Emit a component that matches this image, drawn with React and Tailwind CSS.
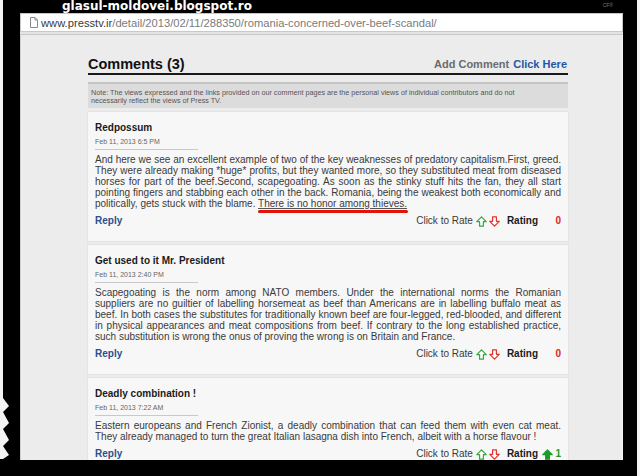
const Up = ({ filled }) => (
  <svg width="11" height="11" viewBox="0 0 11 11" className="block">
    <path
      d="M5.5 0.8 L10.2 5.7 H7.4 V10.2 H3.6 V5.7 H0.8 Z"
      fill={filled ? "#1e9a2a" : "#ffffff"}
      stroke={filled ? "#1e9a2a" : "#35a83c"}
      strokeWidth="1.2"
      strokeLinejoin="round"
    />
  </svg>
);

const Down = () => (
  <svg width="11" height="11" viewBox="0 0 11 11" className="block">
    <path
      d="M5.5 10.2 L10.2 5.3 H7.4 V0.8 H3.6 V5.3 H0.8 Z"
      fill="#ffffff"
      stroke="#e2322b"
      strokeWidth="1.2"
      strokeLinejoin="round"
    />
  </svg>
);

const Line = ({ children, last }) => (
  <div className={last ? "text-left" : "text-justify [text-align-last:justify]"}>{children}</div>
);

const Card = ({ title, date, lines, rating }) => (
  <div className="w-[480px] bg-[#f7f7f7] px-[7px] pt-[10px] pb-[14px] shadow-[0_0_0_1px_#e4e4e4]">
    <div className="text-[10px] leading-[12px] font-bold text-[#1a1a1a]">{title}</div>
    <div className="mt-[3px] text-[7px] leading-[9px] text-[#666]">{date}</div>
    <div className="mt-[3px] w-[103px] h-px bg-[#c9c9c9]" />
    <div className="mt-[4px] text-[10px] leading-[11px] text-[#3a3a3a]">
      {lines.map((l, i) => (
        <Line key={i} last={i === lines.length - 1}>
          {l}
        </Line>
      ))}
    </div>
    <div className="mt-[6px] h-[12px] flex justify-between items-center text-[10px] leading-[12px]">
      <span className="font-bold text-[#2c4f8c]">Reply</span>
      <div className="flex items-center">
        <span className="text-[#3a3a3a]">Click to Rate</span>
        <span className="ml-[3px]">
          <Up />
        </span>
        <span className="ml-[2px]">
          <Down />
        </span>
        <span className="ml-[7px] font-bold text-[#1a1a1a]">Rating</span>
        <div className="w-[23px] flex justify-end items-center">
          {rating === 0 ? (
            <span className="font-bold text-[#e2241b]">0</span>
          ) : (
            <>
              <Up filled />
              <span className="ml-[2px] font-bold text-[#1e9a2a]">{rating}</span>
            </>
          )}
        </div>
      </div>
    </div>
  </div>
);

export default function App() {
  return (
    <div className="relative w-[640px] h-[476px] overflow-hidden bg-black font-['Liberation_Sans',Arial,sans-serif]">
      <div className="flex flex-col pl-[20px] pr-[17px]">
        <div className="h-[13px] flex justify-between items-start">
          <span className="pl-[42px] text-white text-[12px] font-bold leading-[13px] whitespace-nowrap font-['DejaVu_Sans',Verdana,sans-serif]">
            glasul-moldovei.blogspot.ro
          </span>
          <span className="pr-[10px] pt-[3px] text-[5px] leading-[5px] text-[#8a7a6a]">CF®</span>
        </div>
        <div className="h-[18px] bg-white border-l border-t border-r border-[#c7c7c7] flex items-center pl-[9px]">
          <svg width="8" height="11" viewBox="0 0 8 11" className="block">
            <path d="M0.5 0.5 H5 L7.5 3 V10.5 H0.5 Z" fill="#fff" stroke="#8a8a8a" strokeWidth="1" />
            <path d="M5 0.5 V3 H7.5" fill="none" stroke="#8a8a8a" strokeWidth="1" />
          </svg>
          <span className="ml-[3px] text-[11.2px] leading-[14px] whitespace-nowrap">
            <span className="text-[#3a3a3a]">www.presstv.ir</span>
            <span className="text-[#7a7a7a]">/detail/2013/02/11/288350/romania-concerned-over-beef-scandal/</span>
          </span>
        </div>
        <div className="h-[4px] bg-[#e4e4e4] border-t border-b border-[#c9c9c9]" />
        <div className="h-[425px] bg-[#ececec] pl-[67px] overflow-hidden border-l border-[#d0d0d0] border-r border-r-[#f7f7f7]">
          <div className="mt-[20px] w-[480px] h-[20px] flex justify-between border-b-2 border-[#1a1a1a]">
            <span className="text-[14.5px] leading-[18px] font-bold text-[#111]">Comments (3)</span>
            <span className="text-[11px] leading-[18px] font-bold pr-[1px]">
              <span className="text-[#6b6b6b]">Add Comment</span>
              <span className="ml-[4px] text-[#1f57a5]">Click Here</span>
            </span>
          </div>
          <div className="mt-[7px] w-[480px] bg-[#dcdcdc] border-t-2 border-[#c4c4c4] px-[3px] pt-[5px] pb-[3px] text-[7.2px] leading-[8px] text-[#555]">
            Note: The views expressed and the links provided on our comment pages are the personal views of individual
            contributors and do not
            <br />
            necessarily reflect the views of Press TV.
          </div>
          <div className="mt-[4px] flex flex-col gap-[4px]">
            <Card
              title="Redpossum"
              date="Feb 11, 2013 6:5 PM"
              rating={0}
              lines={[
                "And here we see an excellent example of two of the key weaknesses of predatory capitalism.First, greed.",
                "They were already making *huge* profits, but they wanted more, so they substituted meat from diseased",
                "horses for part of the beef.Second, scapegoating. As soon as the stinky stuff hits the fan, they all start",
                "pointing fingers and stabbing each other in the back. Romania, being the weakest both economically and",
                <>
                  politically, gets stuck with the blame.{" "}
                  <span className="relative underline decoration-[#555] underline-offset-[1px]">
                    There is no honor among thieves.
                    <span className="absolute left-0 right-[-1px] bottom-[-4px] h-[3px] rounded-full bg-[#e3120b]" />
                  </span>
                </>,
              ]}
            />
            <Card
              title="Get used to it Mr. President"
              date="Feb 11, 2013 2:40 PM"
              rating={0}
              lines={[
                "Scapegoating is the norm among NATO members. Under the international norms the Romanian",
                "suppliers are no guiltier of labelling horsemeat as beef than Americans are in labelling buffalo meat as",
                "beef. In both cases the substitutes for traditionally known beef are four-legged, red-blooded, and different",
                "in physical appearances and meat compositions from beef. If contrary to the long established practice,",
                "such substitution is wrong the onus of proving the wrong is on Britain and France.",
              ]}
            />
            <Card
              title="Deadly combination !"
              date="Feb 11, 2013 7:22 AM"
              rating={1}
              lines={[
                "Eastern europeans and French Zionist, a deadly combination that can feed them with even cat meat.",
                "They already managed to turn the great Italian lasagna dish into French, albeit with a horse flavour !",
              ]}
            />
          </div>
        </div>
      </div>
      <svg className="absolute left-0 top-0" width="10" height="476" viewBox="0 0 10 476">
        <path
          d="M0 0 H3 V398 L9 406 L3 412 L9 423 L3 429 L9 440 L3 446 L9 455 L3 459 H0 Z"
          fill="#f4f4f4"
        />
      </svg>
      <div className="absolute right-0 top-0 w-[3px] h-[476px] bg-[#f4f4f4]" />
    </div>
  );
}
